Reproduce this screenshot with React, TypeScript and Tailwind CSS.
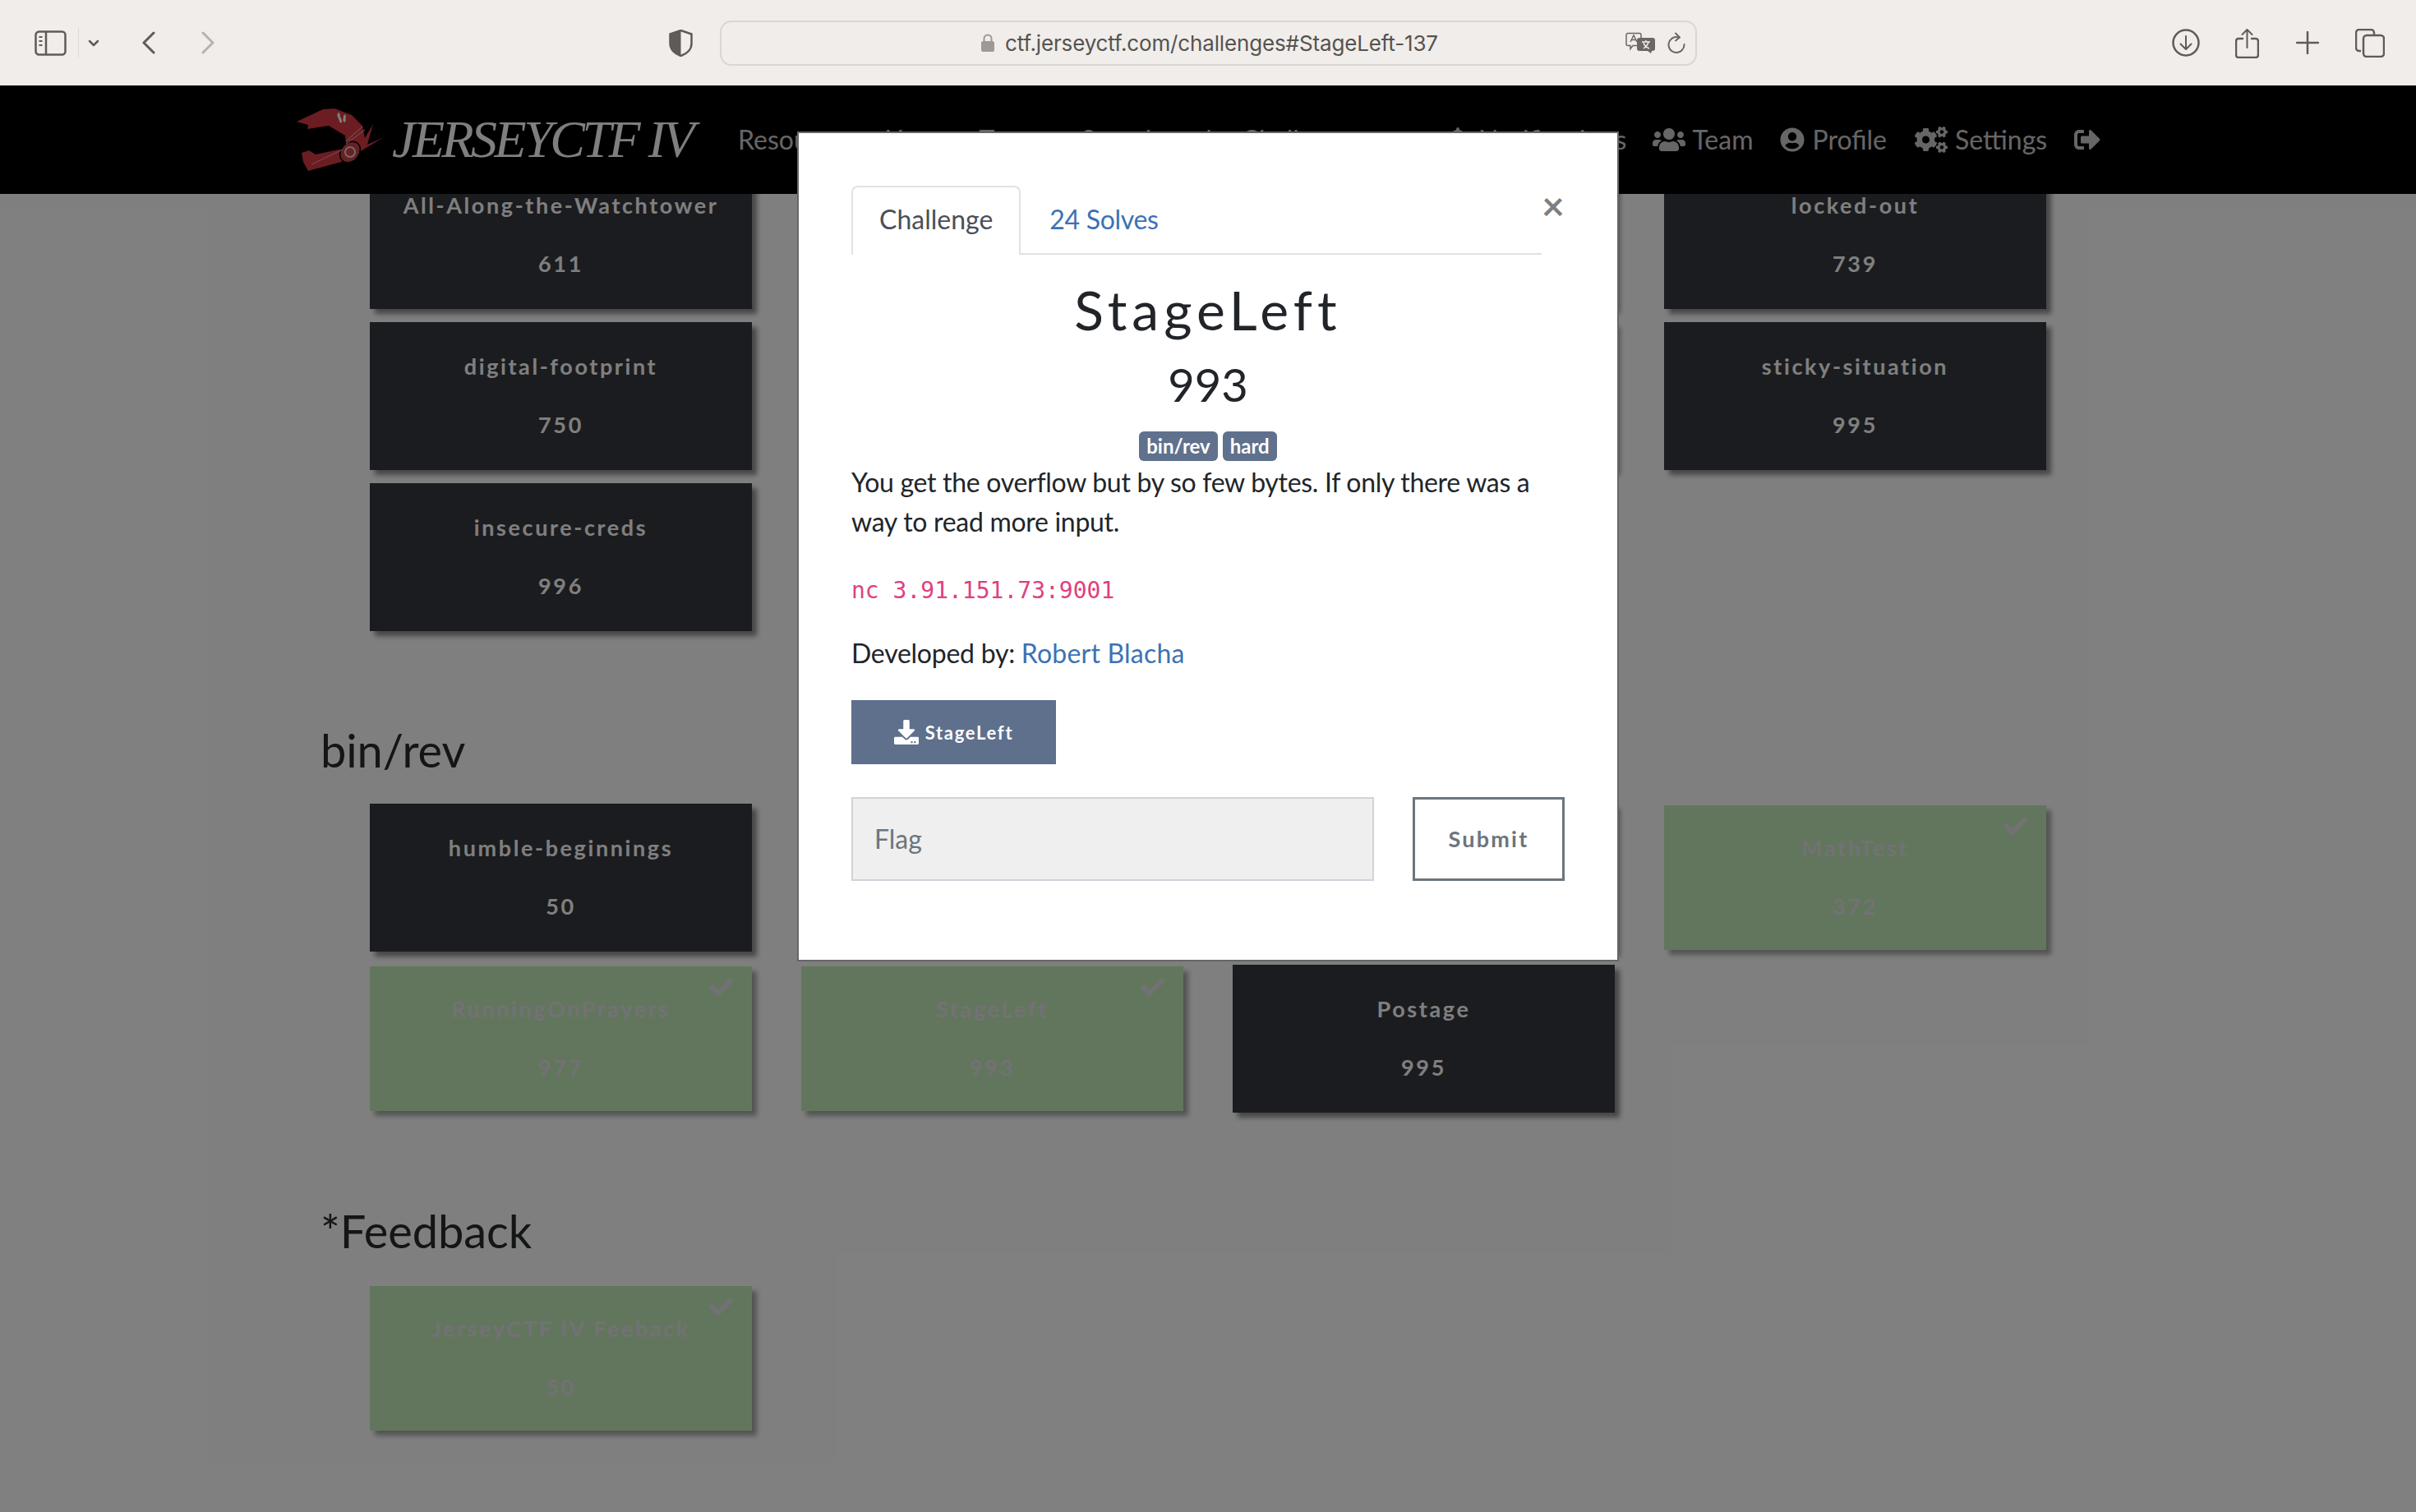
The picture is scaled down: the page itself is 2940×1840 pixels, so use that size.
import { FaBell, FaCheck, FaCogs, FaDownload, FaSignOutAlt, FaUserCircle, FaUsers } from "react-icons/fa";

type Challenge = { name: string; value: number | string; solved?: boolean };

// ===============================Data==============================
const MISC: (Challenge | null)[] = [
  { name: "All-Along-the-Watchtower", value: 611 },
  { name: "", value: "" },
  { name: "", value: "" },
  { name: "locked-out", value: 739 },
  { name: "digital-footprint", value: 750 },
  { name: "", value: "" },
  { name: "", value: "" },
  { name: "sticky-situation", value: 995 },
  { name: "insecure-creds", value: 996 },
];

const BINREV: Challenge[] = [
  { name: "humble-beginnings", value: 50 },
  { name: "", value: "" },
  { name: "", value: "" },
  { name: "MathTest", value: 372, solved: true },
  { name: "RunningOnPrayers", value: 977, solved: true },
  { name: "StageLeft", value: 993, solved: true },
  { name: "Postage", value: 995 },
];

const FEEDBACK: Challenge[] = [{ name: "JerseyCTF IV Feeback", value: 50, solved: true }];

// ===============================Toolbar icons==============================
const SidebarIcon = () => (
  <svg width="39" height="31" viewBox="0 0 39 31" fill="none" stroke="#5f5b58" strokeWidth="2.5">
    <rect x="1.5" y="1.5" width="36" height="28" rx="4" />
    <path d="M14 1.5v28" />
    <path d="M5.5 8h4M5.5 13h4M5.5 18h4" strokeWidth="2" />
  </svg>
);

const Chevron = ({ dir, color }: { dir: "left" | "right"; color: string }) => (
  <svg width="16" height="28" viewBox="0 0 16 28" fill="none" stroke={color} strokeWidth="3" strokeLinecap="round" strokeLinejoin="round">
    <path d={dir === "left" ? "M14 2 2 14l12 12" : "M2 2l12 12L2 26"} />
  </svg>
);

const ShieldIcon = () => (
  <svg width="29" height="33" viewBox="0 0 29 33">
    <path d="M14.5 1 27.5 5.5V17c0 7-5.5 12.5-13 15C7 29.5 1.500 24 1.500 17V5.500Z" fill="none" stroke="#5f5b58" strokeWidth="2.500" />
    <path d="M14.500 1 1.500 5.500V17c0 7 5.500 12.500 13 15Z" fill="#5f5b58" />
  </svg>
);

const TranslateIcon = () => (
  <svg width="36" height="26" viewBox="0 0 36 26" fill="none">
    <path d="M3 1.500h14a2 2 0 0 1 2 2v11a2 2 0 0 1-2 2H9l-3 4v-4H3a2 2 0 0 1-2-2v-11a2 2 0 0 1 2-2Z" stroke="#6b6764" strokeWidth="1.500" />
    <path d="M6 12l4-8 4 8M7.500 9.500h5" stroke="#6b6764" strokeWidth="1.500" />
    <path d="M17 7h16a3 3 0 0 1 3 3v10a3 3 0 0 1-3 3h-1l-1 3-4-3h-10a3 3 0 0 1-3-3V10a3 3 0 0 1 3-3Z" fill="#6b6764" />
    <path d="M20 12h10M25 10v2M22 20c3-2 5-4 6-8M22 13c1 3 4 6 7 7" stroke="#f0edea" strokeWidth="1.500" />
  </svg>
);

const ReloadIcon = () => (
  <svg width="22" height="26" viewBox="0 0 22 26" fill="none" stroke="#6b6764" strokeWidth="2" strokeLinecap="round" strokeLinejoin="round">
    <path d="M14 6.500A9.500 9.500 0 1 0 20.500 15" />
    <path d="M10 1.500l5 5-5 4" />
  </svg>
);

const LockIcon = () => (
  <svg width="16" height="22" viewBox="0 0 16 22">
    <path d="M3.500 10V6a4.500 4.500 0 0 1 9 0v4" fill="none" stroke="#9c9997" strokeWidth="2" />
    <rect x="0" y="9" width="16" height="13" rx="2.500" fill="#9c9997" />
  </svg>
);

const DownloadCircleIcon = () => (
  <svg width="34" height="34" viewBox="0 0 34 34" fill="none" stroke="#5f5b58" strokeWidth="2.500" strokeLinecap="round" strokeLinejoin="round">
    <circle cx="17" cy="17" r="15.500" />
    <path d="M17 9v16M10.500 18.500 17 25l6.500-6.500" strokeWidth="2" />
  </svg>
);

const ShareIcon = () => (
  <svg width="29" height="37" viewBox="0 0 29 37" fill="none" stroke="#5f5b58" strokeWidth="2.500" strokeLinecap="round" strokeLinejoin="round">
    <path d="M9 13H4a3 3 0 0 0-3 3v17a3 3 0 0 0 3 3h21a3 3 0 0 0 3-3V16a3 3 0 0 0-3-3h-5" />
    <path d="M14.500 24V2M8.500 8l6-6 6 6" strokeWidth="2" />
  </svg>
);

const PlusIcon = () => (
  <svg width="28" height="28" viewBox="0 0 28 28" fill="none" stroke="#5f5b58" strokeWidth="2.500" strokeLinecap="round">
    <path d="M14 1v26M1 14h26" />
  </svg>
);

const TabsIcon = () => (
  <svg width="36" height="35" viewBox="0 0 36 35" fill="none" stroke="#5f5b58" strokeWidth="2.500" strokeLinejoin="round">
    <path d="M7 27H5a4 4 0 0 1-4-4V5a4 4 0 0 1 4-4h14a4 4 0 0 1 4 4v3" />
    <rect x="10" y="8" width="25" height="26" rx="4" />
  </svg>
);

// ===============================Logo==============================
const HelmetLogo = () => (
  <svg width="112" height="84" viewBox="0 0 112 84">
    <path
      d="M2 20 34 5 48 4 69 12 82 25 85 40 95 23 88 48 108 39 60 68 16 80 10 69 8 58 17 55 25 60 58 53 62 47 61 37 41 25 15 29 16 24Z"
      fill="#d63a44"
    />
    <ellipse cx="67" cy="57" rx="11" ry="14" transform="rotate(40 67 57)" fill="#c9444d" stroke="#000" strokeWidth="1.500" />
    <circle cx="67" cy="57" r="6" fill="none" stroke="#f0d0d0" strokeWidth="2" />
    <path d="M62 47 85 30M62 44 82 26" stroke="#f0b8b8" strokeWidth="1" />
    <path d="M54 10c-4 3 4 8 1 11M60 12c2 3-2 5 1 8" stroke="#ffffff" strokeWidth="3" fill="none" />
    <path d="M20 72 58 54" stroke="#f0a0a0" strokeWidth="1" />
  </svg>
);

// ===============================Card==============================
const ChallengeCard = ({ challenge }: { challenge: Challenge }) => {
  const { name, value, solved } = challenge;
  return (
    <div
      className={
        solved
          ? "relative my-[2px] h-[176px] bg-[#c4ecba] pt-[32px] text-center text-[27px] font-bold tracking-[2.6px] text-[#e4e4e8] shadow-[6px_6px_6px_rgba(0,0,0,0.35)]"
          : "relative h-[180px] bg-[#36393f] pt-[34px] text-center text-[27px] font-bold tracking-[2.6px] text-white shadow-[6px_6px_6px_rgba(0,0,0,0.45)]"
      }
    >
      {solved && <FaCheck className="absolute right-[23px] top-[11px] text-[29px] text-[#e4e4e8]" />}
      <div className="h-[40px] leading-[40px]">{name}</div>
      <div className="mt-[31px] h-[40px] leading-[40px]">{value}</div>
    </div>
  );
};

const Section = ({ title, challenges, className }: { title?: string; challenges: (Challenge | null)[]; className?: string }) => (
  <section className={className}>
    {title && <h2 className="mb-[32px] h-[67px] text-[56px] leading-[67px] tracking-[-0.1px] text-[#282a2c]">{title}</h2>}
    <div className="ml-[60px] grid grid-cols-[repeat(4,465px)] gap-x-[60px] gap-y-[16px]">
      {challenges.map((c, i) => (c ? <ChallengeCard key={i} challenge={c} /> : null))}
    </div>
  </section>
);

// ===============================Component==============================
export default function App() {
  return (
    <div className="relative h-[1840px] w-[2940px] overflow-hidden bg-white font-['Lato','Liberation_Sans',sans-serif]">
      {/* ===============================Browser Toolbar============================== */}
      <div className="relative z-20 flex h-[104px] items-center bg-[#f0edea]">
        <div className="ml-[42px] flex items-center">
          <SidebarIcon />
          <div className="ml-[14px] h-[36px] w-[1px] bg-[#dcd9d6]" />
          <svg className="ml-[11px]" width="14" height="9" viewBox="0 0 14 9" fill="none" stroke="#5f5b58" strokeWidth="2.500" strokeLinecap="round" strokeLinejoin="round">
            <path d="M2 2l5 5 5-5" />
          </svg>
          <div className="ml-[52px]">
            <Chevron dir="left" color="#5f5b58" />
          </div>
          <div className="ml-[56px]">
            <Chevron dir="right" color="#b5b2af" />
          </div>
          <div className="ml-[553px]">
            <ShieldIcon />
          </div>
        </div>
        <div className="ml-[33px] flex h-[55px] w-[1189px] items-center rounded-[14px] border-2 border-[#d9d6d3] pl-[316px]">
          <LockIcon />
          <span className="ml-[13px] whitespace-nowrap font-['Inter',sans-serif] text-[26px] tracking-[-0.15px] text-[#555351]">
            ctf.jerseyctf.com/challenges#StageLeft-137
          </span>
          <div className="ml-[228px]">
            <TranslateIcon />
          </div>
          <div className="ml-[15px]">
            <ReloadIcon />
          </div>
        </div>
        <div className="ml-[578px]">
          <DownloadCircleIcon />
        </div>
        <div className="ml-[43px]">
          <ShareIcon />
        </div>
        <div className="ml-[45px]">
          <PlusIcon />
        </div>
        <div className="ml-[44px]">
          <TabsIcon />
        </div>
      </div>

      {/* ===============================Navbar============================== */}
      <nav className="relative z-10 flex h-[132px] items-center bg-black pl-[359px] text-[32px] text-white/80">
        <HelmetLogo />
        <span className="ml-[6px] whitespace-nowrap font-['Liberation_Serif',serif] text-[64px] italic tracking-[-3.5px] text-white">JERSEYCTF IV</span>
        <div className="ml-[56px] flex gap-[36px] whitespace-nowrap">
          <span>Resources</span>
          <span>Users</span>
          <span>Teams</span>
          <span>Scoreboard</span>
          <span>Challenges</span>
        </div>
        <div className="absolute left-[1759px] top-0 flex h-full items-center gap-[32px] whitespace-nowrap">
          <span className="flex items-center gap-[10px]">
            <FaBell className="text-[30px]" />
            Notifications
          </span>
          <span className="flex items-center gap-[8px]">
            <FaUsers className="text-[40px]" />
            Team
          </span>
          <span className="flex items-center gap-[10px]">
            <FaUserCircle className="text-[30px]" />
            Profile
          </span>
          <span className="ml-[2px] flex items-center gap-[9px]">
            <FaCogs className="text-[40px]" />
            Settings
          </span>
          <FaSignOutAlt className="ml-[1px] text-[32px]" />
        </div>
      </nav>

      {/* ===============================Challenge Board============================== */}
      <main className="-mt-[40px] pl-[390px]">
        <Section challenges={MISC} />
        <Section className="mt-[111px]" title="bin/rev" challenges={BINREV} />
        <Section className="mt-[110px]" title="*Feedback" challenges={FEEDBACK} />
      </main>

      {/* ===============================Modal Backdrop============================== */}
      <div className="absolute inset-x-0 bottom-0 top-[104px] z-[15] bg-black/50 pt-[56px]">
        <div className="mx-auto h-[1010px] w-[1000px] border-2 border-[#666666] bg-white bg-clip-padding px-[64px] pt-[64px] text-[32px] text-[#212529]">
          {/* ===============================Tabs============================== */}
          <div className="flex items-start">
            <div className="flex h-[84px] w-[840px] border-b-2 border-[#dee2e6]">
              <div className="h-[84px] rounded-t-[8px] border-2 border-b-0 border-[#dee2e6] bg-white px-[32px] pt-[15px] leading-[48px] text-[#495057]">Challenge</div>
              <div className="pl-[35px] pt-[17px] leading-[48px] tracking-[-0.3px] text-[#3c72b2]">24 Solves</div>
            </div>
            <button className="h-[48px] w-[26px] text-center text-[48px] font-bold leading-[48px] text-black/50">×</button>
          </div>

          {/* ===============================Heading============================== */}
          <h3 className="mt-[31px] text-center text-[66px] leading-[72px] tracking-[6px]">StageLeft</h3>
          <h4 className="mt-[23px] text-center text-[56px] leading-[64px]">993</h4>
          <div className="mt-[25px] flex justify-center gap-[6px] text-[24px] font-bold leading-[36px] text-white">
            <span className="rounded-[6px] bg-[#5f718d] px-[9px]">bin/rev</span>
            <span className="rounded-[6px] bg-[#5f718d] px-[9px]">hard</span>
          </div>

          {/* ===============================Description============================== */}
          <p className="mt-[2px] leading-[48px] tracking-[-0.3px]">You get the overflow but by so few bytes. If only there was a way to read more input.</p>
          <p className="mt-[36px] font-['DejaVu_Sans_Mono',monospace] text-[28px] leading-[48px] text-[#e0407f]">nc 3.91.151.73:9001</p>
          <p className="mt-[28px] leading-[48px] tracking-[-0.26px]">
            Developed by: <span className="tracking-[0.2px] text-[#3c72b2]">Robert Blacha</span>
          </p>

          {/* ===============================Download============================== */}
          <button className="mt-[33px] flex h-[78px] w-[249px] items-center justify-center gap-[8px] bg-[#5e708c] text-[22px] font-bold tracking-[1.7px] text-white">
            <FaDownload className="text-[30px]" />
            StageLeft
          </button>

          {/* ===============================Flag Form============================== */}
          <div className="mt-[40px] flex justify-between">
            <div className="flex h-[102px] w-[636px] items-center border-2 border-[#ced4da] bg-[#efefef] pl-[26px] text-[#6c757d]">Flag</div>
            <button className="h-[102px] w-[185px] border-[3px] border-[#6c757d] text-[27px] font-bold tracking-[2.2px] text-[#6c757d]">Submit</button>
          </div>
        </div>
      </div>
    </div>
  );
}
